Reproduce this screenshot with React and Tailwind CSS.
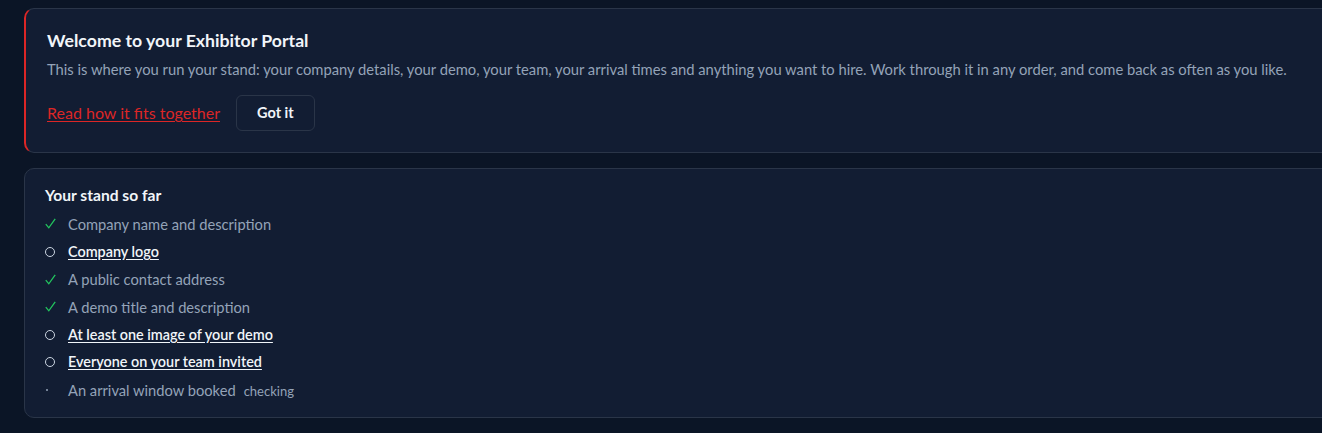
const items = [
  { label: 'Company name and description', state: 'done' },
  { label: 'Company logo', state: 'todo' },
  { label: 'A public contact address', state: 'done' },
  { label: 'A demo title and description', state: 'done' },
  { label: 'At least one image of your demo', state: 'todo' },
  { label: 'Everyone on your team invited', state: 'todo' },
  { label: 'An arrival window booked', state: 'pending' },
];

const Marker = ({ state }) => {
  if (state === 'done')
    return (
      <svg width="11" height="11" viewBox="0 0 11 11" fill="none" stroke="#22c55e" strokeWidth="1.3">
        <path d="M0.8 6.2 L3.8 9.8 L10.2 0.8" />
      </svg>
    );
  if (state === 'todo')
    return <span className="inline-block w-[10px] h-[10px] rounded-full border border-[#cbd5e1]" />;
  return <span className="ml-[1px] inline-block w-[2px] h-[2px] rounded-full bg-[#94a3b8]" />;
};

export default function App() {
  return (
    <div
      className="min-h-[433px] bg-[#0b1526] overflow-hidden pl-6 pt-2 pb-4"
      style={{ fontFamily: '"Lato", "Noto Sans", sans-serif' }}
    >
      <div className="w-[1340px] flex flex-col gap-[15px]">
        <section className="bg-[#121d33] border border-[#2a3548] border-l-2 border-l-[#dc2626] rounded-l-[10px] pl-[21px] pr-6 pt-[20px] pb-[21px]">
          <h1 className="text-[17.7px] font-bold text-[#f1f5f9] leading-6">Welcome to your Exhibitor Portal</h1>
          <p className="mt-[6px] text-[14.75px] text-[#94a3b8] leading-5">
            This is where you run your stand: your company details, your demo, your team, your arrival times and anything you want to hire. Work through it in any order, and come back as often as you like.
          </p>
          <div className="mt-[16px] flex items-center gap-4">
            <a href="#" className="text-[16px] text-[#dc2626] underline underline-offset-2">Read how it fits together</a>
            <button className="h-[36px] px-[20px] rounded-md border border-[#2a3548] text-[14.5px] font-bold text-[#f1f5f9]">
              Got it
            </button>
          </div>
        </section>

        <section className="bg-[#121d33] border border-[#2a3548] rounded-l-[10px] pl-5 pr-6 pt-[16px] pb-[13px]">
          <h2 className="text-[15.6px] font-bold text-[#f1f5f9] leading-5">Your stand so far</h2>
          <ul className="mt-[5px] flex flex-col">
            {items.map((it) => (
              <li key={it.label} className="h-[27.7px] flex items-center">
                <span className="w-[23px] flex items-center">
                  <Marker state={it.state} />
                </span>
                <span className="flex items-baseline gap-2">
                  {it.state === 'todo' ? (
                    <a href="#" className="text-[14.4px] font-semibold text-[#f1f5f9] underline underline-offset-2">{it.label}</a>
                  ) : (
                    <span className="text-[14.7px] text-[#94a3b8]">{it.label}</span>
                  )}
                  {it.state === 'pending' && <span className="text-[13px] text-[#94a3b8]">checking</span>}
                </span>
              </li>
            ))}
          </ul>
        </section>
      </div>
    </div>
  );
}
